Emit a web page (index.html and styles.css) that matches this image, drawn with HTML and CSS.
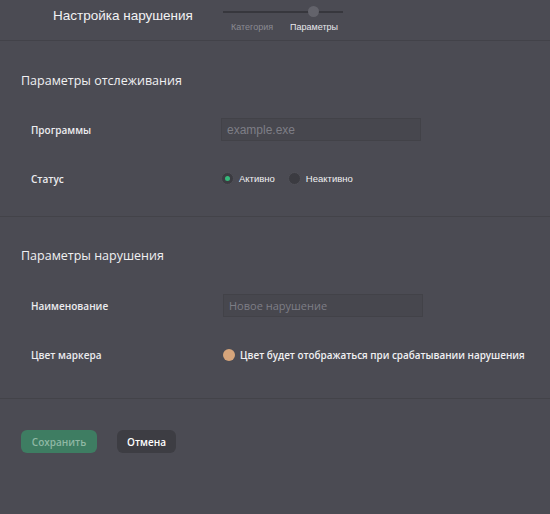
FILE: index.html
```html
<!DOCTYPE html>
<html lang="ru">
<head>
<meta charset="utf-8">
<link rel="stylesheet" href="styles.css">
</head>
<body>
<div class="page">
  <header class="header">
    <h1 class="header-title">Настройка нарушения</h1>
    <div class="stepper">
      <div class="stepper-track"><span class="stepper-dot"></span></div>
      <div class="stepper-labels">
        <span class="step">Категория</span>
        <span class="step step-active">Параметры</span>
      </div>
    </div>
  </header>

  <section class="section section-first">
    <h2 class="section-title">Параметры отслеживания</h2>
    <div class="row">
      <div class="label">Программы</div>
      <div class="control"><div class="input input-a"><span class="placeholder">example.exe</span></div></div>
    </div>
    <div class="row">
      <div class="label">Статус</div>
      <div class="control radios">
        <label class="radio"><span class="radio-mark radio-checked"></span><span class="radio-text">Активно</span></label>
        <label class="radio"><span class="radio-mark"></span><span class="radio-text">Неактивно</span></label>
      </div>
    </div>
  </section>

  <section class="section section-second">
    <h2 class="section-title">Параметры нарушения</h2>
    <div class="row">
      <div class="label">Наименование</div>
      <div class="control"><div class="input input-b"><span class="placeholder placeholder-b">Новое нарушение</span></div></div>
    </div>
    <div class="row">
      <div class="label">Цвет маркера</div>
      <div class="control color-row"><span class="swatch"></span><span class="color-text">Цвет будет отображаться при срабатывании нарушения</span></div>
    </div>
  </section>

  <footer class="footer">
    <button class="btn btn-save">Сохранить</button>
    <button class="btn btn-cancel">Отмена</button>
  </footer>
</div>
</body>
</html>
```

FILE: styles.css
```css
* { box-sizing: border-box; }
html, body { margin: 0; padding: 0; }
body {
  background: #4b4b53;
  font-family: "Open Sans", "Liberation Sans", sans-serif;
  color: #f0f0f2;
  width: 550px;
  height: 514px;
  overflow: hidden;
}
.page { display: flex; flex-direction: column; }

.header {
  height: 41px;
  border-bottom: 1px solid #424249;
  display: flex;
  align-items: flex-start;
}
.header-title {
  margin: 7px 0 0 53px;
  font-family: "Liberation Sans", Arial, sans-serif;
  font-weight: normal;
  font-size: 13.5px;
  line-height: 18px;
  color: #f2f2f4;
  width: 170px;
}
.stepper { width: 125px; padding-top: 11px; }
.stepper-track {
  height: 2px;
  background: #37373d;
  position: relative;
  width: 120px;
}
.stepper-dot {
  position: absolute;
  left: 85px;
  top: -5px;
  width: 11px;
  height: 11px;
  border-radius: 50%;
  background: #63636b;
}
.stepper-labels {
  display: flex;
  gap: 17px;
  padding-left: 8px;
  margin-top: 9px;
  font-family: "Liberation Sans", Arial, sans-serif;
  font-size: 9px;
  line-height: 11px;
}
.step { color: #8a8a92; }
.step-active { color: #e8e8ec; }

.section {
  border-bottom: 1px solid #434349;
  padding: 28px 0 0 21px;
}
.section-first { height: 176px; }
.section-second { height: 182px; padding-top: 27px; }
.section-title {
  margin: 0 0 12px;
  font-size: 12.5px;
  line-height: 24px;
  font-weight: 400;
  color: #f0f0f2;
}
.section-second .section-title { margin-bottom: 13px; }
.row {
  display: flex;
  align-items: center;
  height: 49px;
}
.label {
  width: 200px;
  padding-left: 10px;
  font-size: 10px;
  font-weight: 600;
  color: #ececef;
}
.control { display: flex; align-items: center; }
.input {
  width: 200px;
  height: 23px;
  background: #47474e;
  border: 1px solid #424248;
  display: flex;
  align-items: center;
  padding-left: 5px;
}
.input-b { margin-left: 2px; }
.placeholder {
  font-family: "Liberation Sans", Arial, sans-serif;
  font-size: 12px;
  color: #7e7e86;
}
.placeholder-b { font-family: "Open Sans", sans-serif; font-size: 11px; }

.radios { gap: 13px; }
.radio { display: flex; align-items: center; gap: 5px; }
.radio-mark {
  width: 13px;
  height: 13px;
  border-radius: 50%;
  background: #3b3b41;
  border: 1px solid #505057;
  display: flex;
  align-items: center;
  justify-content: center;
}
.radio-checked::after {
  content: "";
  width: 5px;
  height: 5px;
  border-radius: 50%;
  background: #35b87a;
}
.radio-text {
  font-family: "Liberation Sans", Arial, sans-serif;
  font-size: 9.5px;
  color: #f0f0f2;
}

.color-row { gap: 5px; margin-left: 2px; }
.swatch {
  width: 12px;
  height: 12px;
  border-radius: 50%;
  background: #d6a57b;
}
.color-text {
  font-size: 9.9px;
  font-weight: 600;
  color: #f0f0f2;
}

.footer {
  display: flex;
  gap: 20px;
  padding: 31px 0 0 21px;
}
.btn {
  height: 23px;
  border: none;
  border-radius: 6px;
  font-family: "Open Sans", sans-serif;
  font-size: 10px;
  font-weight: 600;
  padding: 0;
}
.btn-save {
  width: 76px;
  background: #3e7d62;
  color: #8fb8a4;
}
.btn-cancel {
  width: 59px;
  background: #3d3d43;
  color: #ffffff;
}
```
